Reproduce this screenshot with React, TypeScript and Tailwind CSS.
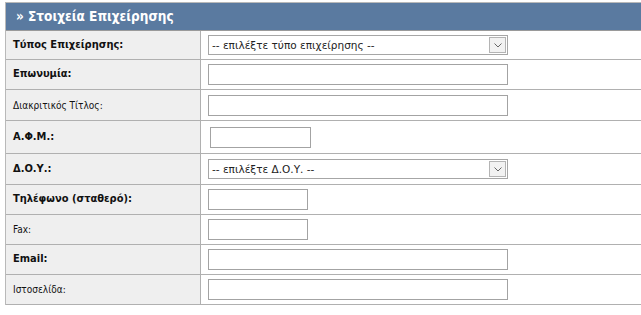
import React from "react";

type Row = {
  label: string;
  bold: boolean;
  kind: "select" | "input";
  w?: number;
  ml?: boolean;
  text?: string;
  h: string;
};

const rows: Row[] = [
  { label: "Τύπος Επιχείρησης:", bold: true, kind: "select", text: "-- επιλέξτε τύπο επιχείρησης --", h: "h-[29px]" },
  { label: "Επωνυμία:", bold: true, kind: "input", w: 300, h: "h-[30px]" },
  { label: "Διακριτικός Τίτλος:", bold: false, kind: "input", w: 300, h: "h-[31px]" },
  { label: "Α.Φ.Μ.:", bold: true, kind: "input", w: 101, ml: true, h: "h-[33px]" },
  { label: "Δ.Ο.Υ.:", bold: true, kind: "select", text: "-- επιλέξτε Δ.Ο.Υ. --", h: "h-[31px]" },
  { label: "Τηλέφωνο (σταθερό):", bold: true, kind: "input", w: 100, h: "h-[30px]" },
  { label: "Fax:", bold: false, kind: "input", w: 100, h: "h-[30px]" },
  { label: "Email:", bold: true, kind: "input", w: 300, h: "h-[30px]" },
  { label: "Ιστοσελίδα:", bold: false, kind: "input", w: 300, h: "h-[30px]" },
];

function Select({ text }: { text: string }) {
  return (
    <div className="flex h-[20px] w-[300px] items-center justify-between border border-[#a6a6a6] bg-white pl-[3px] pr-[1px]">
      <span
        className="text-[10.5px] leading-none text-[#222]"
        style={{ fontFamily: '"DejaVu Sans", sans-serif' }}
      >
        {text}
      </span>
      <span className="flex h-[16px] w-[17px] items-center justify-center border border-[#b4b4b4] bg-[#f2f2f2]">
        <svg width="8" height="5" viewBox="0 0 8 5">
          <path d="M0.5 0.5 L4 4 L7.5 0.5" fill="none" stroke="#666" strokeWidth="1" />
        </svg>
      </span>
    </div>
  );
}

export default function App() {
  return (
    <div
      className="h-[315px] w-[641px] overflow-hidden bg-white pt-[2px] pl-[5px]"
      style={{ fontFamily: '"DejaVu Sans Condensed", "DejaVu Sans", sans-serif' }}
    >
      <div className="w-[700px] border-l border-t border-[#b9b9b9]">
        <div className="flex h-[28px] items-center border-b border-[#9a9a9a] bg-[#5a7aa0] pl-[10px] text-[13.5px] font-bold text-white">
          » Στοιχεία Επιχείρησης
        </div>
        {rows.map((r, i) => (
          <div key={i} className={`flex ${r.h} border-b border-[#b0b0b0]`}>
            <div
              className={`flex w-[195px] items-center border-r border-[#b0b0b0] bg-[#efefef] pl-[7px] text-[#111] ${
                r.bold ? "text-[11px] font-bold" : "text-[10px]"
              }`}
            >
              {r.label}
            </div>
            <div className={`flex flex-1 items-center ${r.ml ? "pl-[9px]" : "pl-[7px]"}`}>
              {r.kind === "select" ? (
                <Select text={r.text || ""} />
              ) : r.w === 300 ? (
                <div className="h-[21px] w-[300px] border border-[#a3a3a3] bg-white" />
              ) : r.w === 101 ? (
                <div className="h-[21px] w-[101px] border border-[#a3a3a3] bg-white" />
              ) : (
                <div className="h-[21px] w-[100px] border border-[#a3a3a3] bg-white" />
              )}
            </div>
          </div>
        ))}
      </div>
    </div>
  );
}
